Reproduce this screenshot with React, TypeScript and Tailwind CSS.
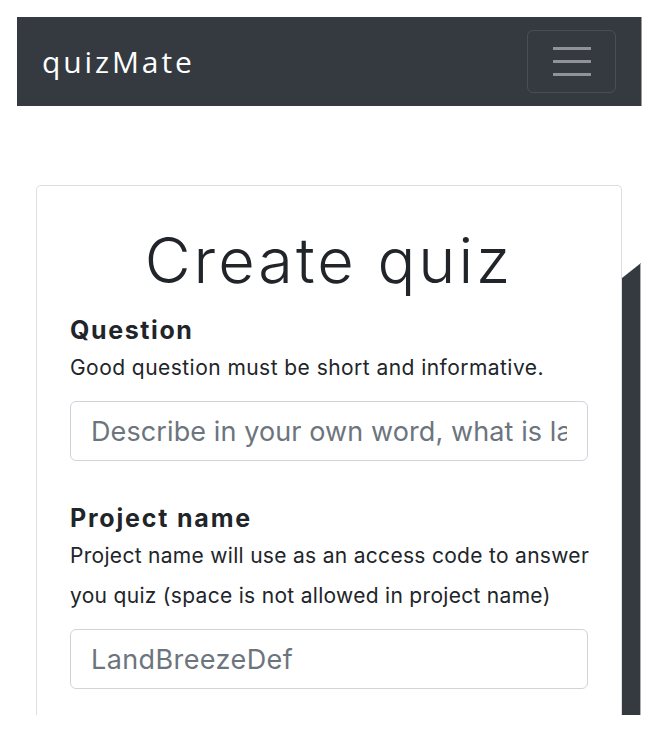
export default function App() {
    return (
        <div className="w-[658px] h-[729px] bg-white overflow-hidden pt-[17px] pl-[17px] font-['Inter',sans-serif] text-[#212529]">
            {/* Navbar */}
            <nav className="w-[625px] h-[89px] bg-[#343a40] border-r border-[#9a9a9a] flex items-center justify-between pl-[25px] pr-[25px]">
                <span className="font-['Open_Sans',sans-serif] text-[30px] text-white tracking-[2.9px]">quizMate</span>
                <button className="w-[89px] h-[63px] rounded-[6px] border border-white/10 flex flex-col items-center justify-center gap-[10px]">
                    <span className="block w-[38px] h-[3px] bg-[#8f9296]" />
                    <span className="block w-[38px] h-[3px] bg-[#8f9296]" />
                    <span className="block w-[38px] h-[3px] bg-[#8f9296]" />
                </button>
            </nav>

            {/* Content */}
            <div className="mt-[79px] ml-[19px] flex h-[530px]">
                <div className="w-[586px] h-full border border-b-0 border-[#dedede] rounded-t-[5px] px-[33px] pt-[34px]">
                    <h1 className="text-center font-light text-[63px] leading-[80px] tracking-[3px]">Create quiz</h1>

                    <div className="mt-[14px]">
                        <label className="block font-bold text-[25px] leading-[32px] tracking-[1.6px]">Question</label>
                        <p className="mt-[2px] text-[21px] leading-[40px] tracking-[0.45px]">Good question must be short and informative.</p>
                        <input
                            className="mt-[13px] w-full h-[60px] rounded-[6px] border border-[#ced4da] px-[20px] text-[27px] tracking-[0.1px] placeholder:text-[#6c757d] outline-none"
                            placeholder="Describe in your own word, what is land breeze"
                        />
                    </div>

                    <div className="mt-[41px]">
                        <label className="block font-bold text-[25px] leading-[32px] tracking-[1.8px]">Project name</label>
                        <p className="mt-[2px] text-[21px] leading-[40px] tracking-[0.3px] whitespace-nowrap">
                            Project name will use as an access code to answer
                            <br />
                            you quiz (space is not allowed in project name)
                        </p>
                        <input
                            className="mt-[13px] w-full h-[60px] rounded-[6px] border border-[#ced4da] px-[20px] text-[27px] tracking-[0.4px] placeholder:text-[#6c757d] outline-none"
                            placeholder="LandBreezeDef"
                        />
                    </div>
                </div>
                <div className="w-[19px] mt-[78px] bg-[#343a40] border-r border-[#b0b0b0] [clip-path:polygon(0_15px,100%_0,100%_100%,0_100%)]" />
            </div>
        </div>
    );
}
